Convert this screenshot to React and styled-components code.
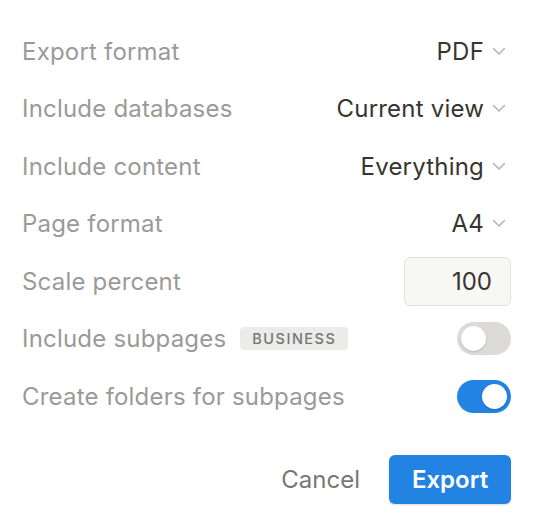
import React, { useState } from 'react';
import styled, { createGlobalStyle } from 'styled-components';

const GlobalStyle = createGlobalStyle`
  html, body {
    margin: 0;
    padding: 0;
    background: #ffffff;
  }
  body {
    font-family: Inter, "Noto Sans", "Liberation Sans", sans-serif;
    -webkit-font-smoothing: antialiased;
  }
`;

const options = [
  { label: 'Export format', value: 'PDF' },
  { label: 'Include databases', value: 'Current view' },
  { label: 'Include content', value: 'Everything' },
  { label: 'Page format', value: 'A4' },
];

const ChevronDown = () => (
  <svg width="14" height="9" viewBox="0 0 14 9" fill="none">
    <path d="M1.5 1.5 L7 7 L12.5 1.5" stroke="#b4b3b0" strokeWidth="1.5" strokeLinecap="round" strokeLinejoin="round" />
  </svg>
);

const App = () => {
  const [subpages, setSubpages] = useState(false);
  const [folders, setFolders] = useState(true);

  return (
    <>
      <GlobalStyle />
      <Panel>
        {options.map((opt) => (
          <Row key={opt.label}>
            <Label>{opt.label}</Label>
            <Select>
              <span>{opt.value}</span>
              <ChevronDown />
            </Select>
          </Row>
        ))}
        <Row>
          <Label>Scale percent</Label>
          <NumberInput defaultValue="100" />
        </Row>
        <Row>
          <Label>
            Include subpages
            <Badge>Business</Badge>
          </Label>
          <Toggle $on={subpages} onClick={() => setSubpages(!subpages)} />
        </Row>
        <Row>
          <Label>Create folders for subpages</Label>
          <Toggle $on={folders} onClick={() => setFolders(!folders)} />
        </Row>
        <Footer>
          <CancelButton>Cancel</CancelButton>
          <ExportButton>Export</ExportButton>
        </Footer>
      </Panel>
    </>
  );
};

export default App;

const Panel = styled.div`
  width: 542px;
  height: 528px;
  box-sizing: border-box;
  padding: 22.5px 31px 0 22px;
  display: flex;
  flex-direction: column;
`;

const Row = styled.div`
  height: 57.5px;
  display: flex;
  align-items: center;
  justify-content: space-between;
`;

const Label = styled.div`
  display: flex;
  align-items: center;
  gap: 14px;
  font-size: 24px;
  letter-spacing: 0.2px;
  color: #9b9a97;
`;

const Select = styled.div`
  display: flex;
  align-items: center;
  gap: 8px;
  padding-right: 5px;
  font-size: 24px;
  letter-spacing: 0.2px;
  color: #37352f;
  cursor: pointer;
`;

const NumberInput = styled.input`
  width: 107px;
  height: 49px;
  box-sizing: border-box;
  padding: 0 18px 0 12px;
  border: 1.5px solid #e3e2e0;
  border-radius: 6px;
  background: #f7f7f5;
  font-family: inherit;
  font-size: 24px;
  color: #37352f;
  text-align: right;
  outline: none;
`;

const Badge = styled.span`
  display: inline-flex;
  align-items: center;
  height: 23px;
  padding: 0 12px;
  border-radius: 4px;
  background: #ebebea;
  color: #787774;
  font-size: 14.5px;
  font-weight: 500;
  letter-spacing: 1.5px;
  text-transform: uppercase;
`;

const Toggle = styled.button`
  position: relative;
  width: 54px;
  height: 33px;
  padding: 0;
  border: none;
  border-radius: 17px;
  background: ${(p) => (p.$on ? '#2383e2' : '#dcdbd8')};
  cursor: pointer;

  &::after {
    content: '';
    position: absolute;
    top: 4px;
    left: ${(p) => (p.$on ? '25px' : '4px')};
    width: 25px;
    height: 25px;
    border-radius: 50%;
    background: #ffffff;
    box-shadow: 0 1px 2px rgba(15, 15, 15, 0.2);
  }
`;

const Footer = styled.div`
  display: flex;
  justify-content: flex-end;
  align-items: center;
  gap: 18px;
  margin-top: 30px;
`;

const CancelButton = styled.button`
  height: 49px;
  padding: 0 11px;
  border: none;
  background: transparent;
  font-family: inherit;
  font-size: 24px;
  color: #787774;
  cursor: pointer;
`;

const ExportButton = styled.button`
  width: 122px;
  height: 49px;
  border: none;
  border-radius: 6px;
  background: #2383e2;
  box-shadow: 0 1px 2px rgba(15, 15, 15, 0.15);
  font-family: inherit;
  font-size: 24px;
  font-weight: 600;
  color: #ffffff;
  cursor: pointer;
`;
